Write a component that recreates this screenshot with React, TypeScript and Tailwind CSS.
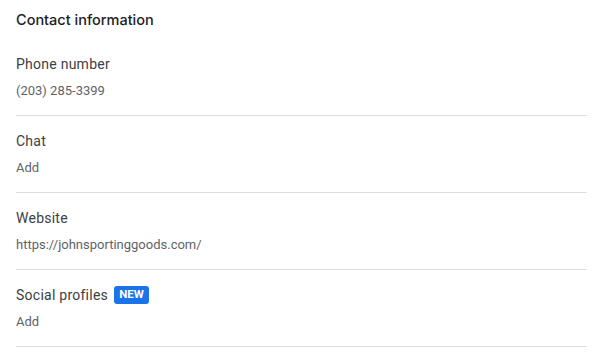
const SECTIONS = [
  { label: "Phone number", value: "(203) 285-3399" },
  { label: "Chat", value: "Add" },
  { label: "Website", value: "https://johnsportinggoods.com/" },
  { label: "Social profiles", value: "Add", badge: "NEW" },
];

export default function App() {
  return (
    <div className="min-h-screen bg-white px-4 pt-[10px] font-['Roboto','Liberation_Sans',sans-serif]">
      <h2 className="text-[14.5px] leading-5 font-medium text-[#202124] font-['Inter','Roboto',sans-serif]">
        Contact information
      </h2>
      <div className="mt-6">
        {SECTIONS.map((s, i) => (
          <div key={s.label} className={`border-b border-[#dadce0] pb-[14px] ${i === 0 ? "" : "pt-[15px]"}`}>
            <div className="flex h-5 items-center gap-[6px] text-[14px] leading-5 tracking-[0.25px] text-[#3c4043]">
              <span>{s.label}</span>
              {s.badge && (
                <span className="flex h-[18px] w-[35px] items-center justify-center rounded-[3px] bg-[#1a73e8] text-[11.5px] font-bold leading-none tracking-normal text-white">
                  {s.badge}
                </span>
              )}
            </div>
            <div className="mt-[7px] text-[13px] leading-5 text-[#5f6368]">{s.value}</div>
          </div>
        ))}
      </div>
    </div>
  );
}
